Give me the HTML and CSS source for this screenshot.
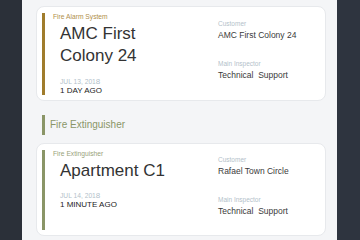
FILE: index.html
```html
<!DOCTYPE html>
<html lang="en">
<head>
    <meta charset="UTF-8">
    <meta name="viewport" content="width=device-width, initial-scale=1.0">
    <title>Inspections</title>
    <link rel="stylesheet" href="styles.css">
</head>
<body>
    <div class="app">
        <div class="side side-left"></div>
        <div class="main">
            <div class="card">
                <div class="info alarm">
                    <div class="type">Fire Alarm System</div>
                    <div class="title">AMC First<br>Colony 24</div>
                    <div class="date">JUL 13, 201<span class="last">8</span></div>
                    <div class="ago">1 DAY AGO</div>
                </div>
                <div class="meta">
                    <div class="meta-label">Customer</div>
                    <div class="meta-value">AMC First Colony 24</div>
                    <div class="meta-label second">Main Inspector</div>
                    <div class="meta-value">Technical&nbsp; Support</div>
                </div>
            </div>

            <div class="section extinguisher">Fire Extinguisher</div>

            <div class="card">
                <div class="info extinguisher">
                    <div class="type">Fire Extinguisher</div>
                    <div class="title">Apartment C1</div>
                    <div class="date">JUL 14, 201<span class="last">8</span></div>
                    <div class="ago">1 MINUTE AGO</div>
                </div>
                <div class="meta">
                    <div class="meta-label">Customer</div>
                    <div class="meta-value">Rafael Town Circle</div>
                    <div class="meta-label second">Main Inspector</div>
                    <div class="meta-value">Technical&nbsp; Support</div>
                </div>
            </div>
        </div>
        <div class="side side-right"></div>
    </div>
</body>
</html>
```

FILE: styles.css
```css
body {
    margin: 0;
    font-family: "Liberation Sans", Arial, sans-serif;
    color: #333;
    overflow: hidden;
}

.app {
    display: flex;
    height: 240px;
}

.side {
    background-color: #2b3039;
}

.side-left {
    width: 22px;
}

.side-right {
    width: 23px;
    background-color: #2e343f;
}

.main {
    flex: 1;
    background-color: #f4f5f7;
    padding: 6px 11px 0 14px;
}

.card {
    display: flex;
    background-color: #fff;
    border: 1px solid #e7e9ec;
    border-radius: 8px;
    padding: 6px 5px 5px 5px;
}

.info {
    flex: 1;
    min-height: 80px;
    border-left: 3px solid #a07c2c;
    padding-left: 8px;
}

.info.extinguisher {
    border-left-color: #8a9567;
}

.type {
    font-size: 6.7px;
    line-height: 8px;
    color: #b08f4c;
}

.extinguisher .type {
    color: #98a27a;
}

.title {
    font-size: 17px;
    line-height: 22px;
    margin: 2px 0 0 7px;
    color: #333;
}

.date {
    font-size: 6.7px;
    line-height: 8px;
    margin: 10.5px 0 0 7px;
    color: #b3bfca;
}

.date .last {
    font-size: 8px;
}

.ago {
    font-size: 8px;
    line-height: 9px;
    margin-left: 7px;
    color: #222;
}

.meta {
    width: 102px;
    padding-top: 6.5px;
}

.meta-label {
    font-size: 6.5px;
    line-height: 8px;
    color: #b3bfca;
}

.meta-label.second {
    margin-top: 19px;
}

.meta-value {
    font-size: 8.5px;
    line-height: 11px;
    margin-top: 2px;
    color: #3a3a3a;
}

.section {
    margin: 14px 0 8px 6px;
    border-left: 3px solid #8a9567;
    padding-left: 5px;
    font-size: 10px;
    line-height: 20px;
    color: #8a9567;
}
```
